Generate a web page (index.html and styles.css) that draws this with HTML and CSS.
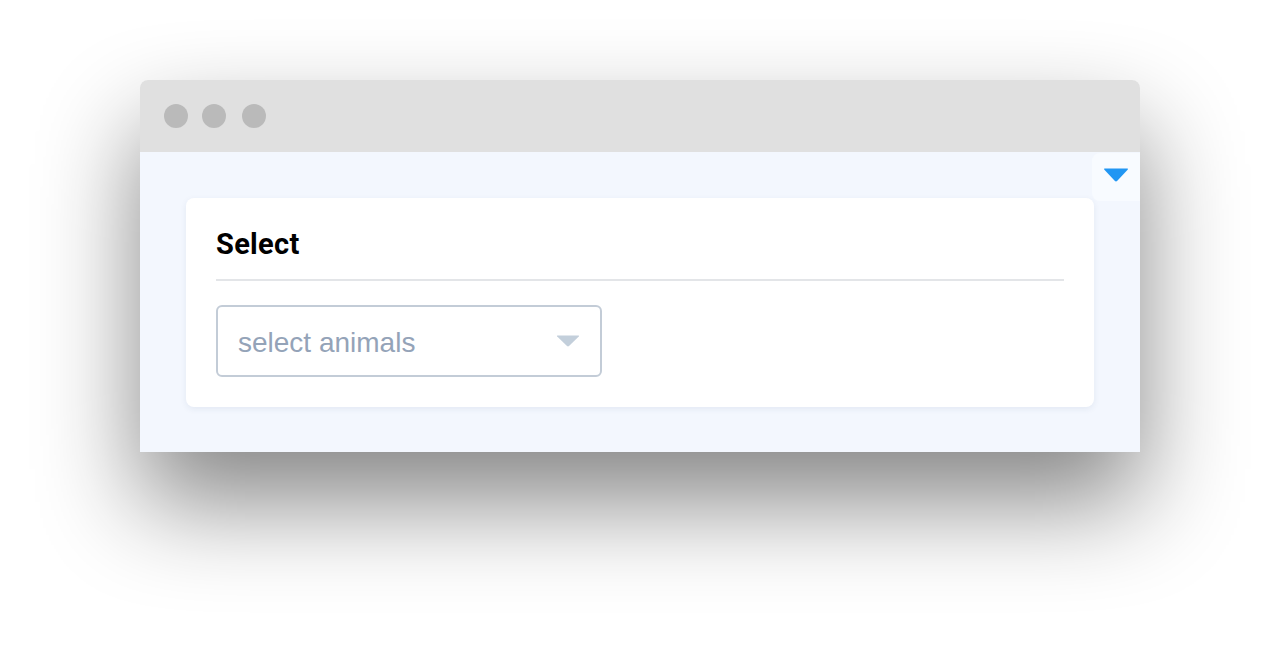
FILE: index.html
```html
<!DOCTYPE html>
<html lang="en">
<head>
<meta charset="utf-8">
<title>Select</title>
<link rel="stylesheet" href="styles.css">
</head>
<body>
<div class="stage">
  <div class="window">
    <div class="titlebar">
      <span class="dot"></span>
      <span class="dot dot-2"></span>
      <span class="dot dot-3"></span>
    </div>
    <div class="content">
      <button class="toggle" aria-label="toggle">
        <svg width="26" height="14" viewBox="0 0 26 14"><path d="M2 0.5 L24 0.5 Q25.8 0.5 24.6 1.8 L14.3 12.8 Q13 14 11.7 12.8 L1.4 1.8 Q0.2 0.5 2 0.5 Z" fill="#2196f3"/></svg>
      </button>
      <div class="card">
        <h2 class="card-title">Select</h2>
        <div class="divider"></div>
        <div class="select">
          <span class="placeholder">select animals</span>
          <svg class="caret" width="24" height="12" viewBox="0 0 24 12"><path d="M1.5 0.5 L22.5 0.5 Q23.6 0.5 22.8 1.4 L13 11 Q12 11.8 11 11 L1.2 1.4 Q0.4 0.5 1.5 0.5 Z" fill="#c3cfdb"/></svg>
        </div>
      </div>
    </div>
  </div>
</div>
</body>
</html>
```
FILE: styles.css
```css
html, body {
  margin: 0;
  padding: 0;
  background: #ffffff;
}
body {
  width: 1280px;
  height: 652px;
  overflow: hidden;
  font-family: "Liberation Sans", Arial, sans-serif;
}
.stage {
  padding: 80px 140px 0 140px;
}
.window {
  width: 1000px;
  border-radius: 8px 8px 0 0;
  box-shadow: 0 50px 100px rgba(0, 0, 0, 0.48);
}
.titlebar {
  height: 72px;
  background: #e0e0e0;
  border-radius: 8px 8px 0 0;
  display: flex;
  align-items: center;
  padding-left: 24px;
}
.dot {
  width: 24px;
  height: 24px;
  border-radius: 50%;
  background: #bababa;
}
.dot-2 { margin-left: 14px; }
.dot-3 { margin-left: 16px; }
.content {
  position: relative;
  height: 300px;
  box-sizing: border-box;
  padding: 46px;
  background: #f3f7fe;
}
.toggle {
  position: absolute;
  top: 1px;
  right: 0;
  width: 48px;
  height: 48px;
  border: none;
  margin: 0;
  padding: 15px 0 0 0;
  box-sizing: border-box;
  background: #f8fbff;
  border-radius: 8px 0 0 8px;
  display: flex;
  align-items: flex-start;
  justify-content: center;
}
.toggle svg { display: block; margin-right: 1px; }
.card {
  background: #ffffff;
  border-radius: 8px;
  box-shadow: 0 2px 6px rgba(40, 60, 110, 0.08);
  padding: 30px 30px 30px 30px;
}
.card-title {
  margin: 0;
  font-family: Roboto, "Liberation Sans", sans-serif;
  font-weight: 700;
  font-size: 29px;
  letter-spacing: 0.3px;
  line-height: 33px;
  color: #000000;
}
.divider {
  height: 2px;
  background: #e3e5e8;
  margin-top: 18px;
  margin-bottom: 24px;
}
.select {
  width: 386px;
  height: 72px;
  box-sizing: border-box;
  border: 2px solid #c3ccd7;
  border-radius: 6px;
  display: flex;
  align-items: center;
  justify-content: space-between;
  padding: 0 20px 0 20px;
}
.placeholder {
  font-size: 28px;
  color: #94a3b8;
  padding-top: 4px;
}
.caret { display: block; }
```
